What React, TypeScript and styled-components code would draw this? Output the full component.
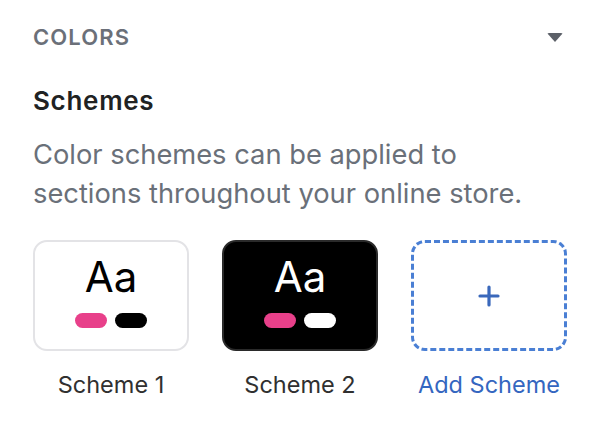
import React from 'react';
import styled, { createGlobalStyle } from 'styled-components';

const GlobalStyle = createGlobalStyle`
  html, body {
    margin: 0;
    padding: 0;
    background: #ffffff;
  }
  body {
    font-family: Inter, 'Noto Sans', 'Liberation Sans', sans-serif;
    -webkit-font-smoothing: antialiased;
  }
`;

const Panel = styled.div`
  width: 598px;
  height: 428px;
  box-sizing: border-box;
  padding: 25px 33px 0 33px;
`;

const SectionHeader = styled.div`
  display: flex;
  align-items: center;
  justify-content: space-between;
  height: 24px;
  padding-right: 2px;
`;

const SectionTitle = styled.span`
  font-size: 22px;
  line-height: 24px;
  font-weight: 600;
  letter-spacing: 1.1px;
  color: #6b7079;
`;

const Caret = styled.span`
  width: 0;
  height: 0;
  border-left: 8px solid transparent;
  border-right: 8px solid transparent;
  border-top: 9px solid #5c6068;
  border-radius: 2px;
`;

const Title = styled.h2`
  margin: 36px 0 0 0;
  font-size: 26px;
  line-height: 32px;
  font-weight: 600;
  letter-spacing: 0.7px;
  color: #202223;
`;

const Description = styled.p`
  margin: 18px 0 0 0;
  font-size: 27.3px;
  line-height: 39px;
  color: #6a7079;
`;

const SchemeGrid = styled.div`
  display: grid;
  grid-template-columns: repeat(3, 156px);
  column-gap: 33px;
  margin-top: 27px;
`;

const SchemeItem = styled.div`
  display: flex;
  flex-direction: column;
  align-items: center;
`;

const Swatch = styled.div<{ $dark?: boolean }>`
  width: 100%;
  height: 111px;
  box-sizing: border-box;
  border-radius: 14px;
  border: 2px solid ${(p) => (p.$dark ? '#2a2a2a' : '#e3e3e6')};
  background: ${(p) => (p.$dark ? '#000000' : '#ffffff')};
  display: flex;
  flex-direction: column;
  align-items: center;
  gap: 14px;
  padding-top: 13px;
`;

const AddSwatch = styled.div`
  width: 100%;
  height: 111px;
  box-sizing: border-box;
  border-radius: 14px;
  border: 3px dashed #4a7fd4;
  display: flex;
  align-items: center;
  justify-content: center;
`;

const Sample = styled.span<{ $dark?: boolean }>`
  font-size: 42px;
  line-height: 44px;
  font-weight: 400;
  color: ${(p) => (p.$dark ? '#ffffff' : '#000000')};
`;

const Pills = styled.div`
  display: flex;
  gap: 8px;
`;

const Pill = styled.span<{ $color: string }>`
  width: 32px;
  height: 15px;
  border-radius: 8px;
  background: ${(p) => p.$color};
`;

const Label = styled.span<{ $link?: boolean }>`
  margin-top: 20px;
  font-size: 23.5px;
  line-height: 28px;
  color: ${(p) => (p.$link ? '#3466c0' : '#303030')};
`;

const schemes = [
  { name: 'Scheme 1', dark: false, accent: '#e8408a', secondary: '#000000' },
  { name: 'Scheme 2', dark: true, accent: '#e8408a', secondary: '#ffffff' },
];

export default function App() {
  return (
    <>
      <GlobalStyle />
      <Panel>
        <SectionHeader>
          <SectionTitle>COLORS</SectionTitle>
          <Caret />
        </SectionHeader>
        <Title>Schemes</Title>
        <Description>
          Color schemes can be applied to
          <br />
          sections throughout your online store.
        </Description>
        <SchemeGrid>
          {schemes.map((s) => (
            <SchemeItem key={s.name}>
              <Swatch $dark={s.dark}>
                <Sample $dark={s.dark}>Aa</Sample>
                <Pills>
                  <Pill $color={s.accent} />
                  <Pill $color={s.secondary} />
                </Pills>
              </Swatch>
              <Label>{s.name}</Label>
            </SchemeItem>
          ))}
          <SchemeItem>
            <AddSwatch>
              <svg width="22" height="22" viewBox="0 0 22 22">
                <path
                  d="M11 2v18M2 11h18"
                  stroke="#3a68bb"
                  strokeWidth="3.2"
                  strokeLinecap="round"
                />
              </svg>
            </AddSwatch>
            <Label $link>Add Scheme</Label>
          </SchemeItem>
        </SchemeGrid>
      </Panel>
    </>
  );
}
